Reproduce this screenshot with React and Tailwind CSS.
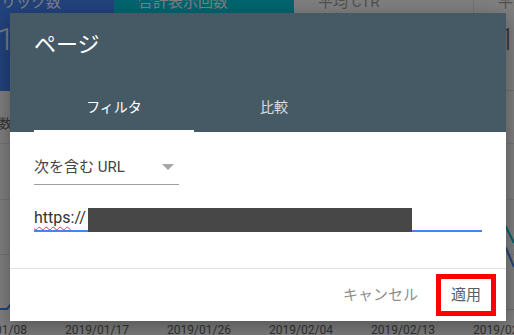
import React from "react";

const CARDS = [
  { label: "クリック数", value: "1,204", bg: "bg-[#4487fa]", text: "text-white", width: "w-[152px]", valueClass: "ml-[11px] text-white" },
  { label: "合計表示回数", value: "48,312", bg: "bg-[#00cadf]", text: "text-white", width: "w-[180px]", valueClass: "text-white" },
  { label: "平均 CTR", value: "2.5%", bg: "bg-white", text: "text-[#a3a3a3]", width: "w-[180px] border-r border-b border-[#e6e6e6]", valueClass: "text-[#737373]" },
  { label: "平均掲載順位", value: "18.4", bg: "bg-white", text: "text-[#a3a3a3]", width: "w-[180px] border-b border-[#e6e6e6]", valueClass: "text-[#737373]" },
];

const DATES = ["2019/01/08", "2019/01/17", "2019/01/26", "2019/02/04", "2019/02/13", "2019/02/22"];

function Chart() {
  return (
    <svg className="absolute inset-0" width="514" height="244" viewBox="0 0 514 244">
      {[52, 108, 163].map((y) => (
        <line key={y} x1="0" y1={y + 0.5} x2="514" y2={y + 0.5} stroke="#e8e8e8" strokeWidth="1" />
      ))}
      <line x1="0" y1="218.5" x2="514" y2="218.5" stroke="#dcdcdc" strokeWidth="1" />
      <polyline points="0,218 7,218 12,212" fill="none" stroke="#4285f4" strokeWidth="2" />
      <polyline points="500,126 506,136 514,152" fill="none" stroke="#00c4d8" strokeWidth="2" />
      <polyline points="500,148 506,157 514,176" fill="none" stroke="#4285f4" strokeWidth="2" />
    </svg>
  );
}

export default function App() {
  return (
    <div className="relative w-[514px] h-[335px] overflow-hidden bg-white font-['Roboto','Noto_Sans_CJK_JP',sans-serif]">
      {/* page under the dialog */}
      <div className="flex h-[91px] ml-[-38px]">
        {CARDS.map((c) => (
          <div key={c.label} className={`shrink-0 box-border h-[91px] pl-6 ${c.bg} ${c.width}`}>
            <div className={`mt-[-8px] text-[15px] leading-5 whitespace-nowrap ${c.text}`}>{c.label}</div>
            <div className={`mt-[7px] text-[32px] leading-10 font-light whitespace-nowrap ${c.valueClass}`}>{c.value}</div>
          </div>
        ))}
      </div>
      <div className="relative flex flex-col h-[244px]">
        <Chart />
        <div className="relative mt-[23px] ml-[-40px] w-[52px] text-[13px] leading-5 text-[#666] whitespace-nowrap">表示回数</div>
        <div className="relative mt-auto mb-[-3px] ml-[-56px] flex text-[12px] leading-4 text-[#666]">
          {DATES.map((d) => (
            <div key={d} className="w-[102px] shrink-0 text-center">{d}</div>
          ))}
        </div>
      </div>

      {/* scrim */}
      <div className="absolute inset-0 bg-black/50" />

      {/* dialog */}
      <div className="absolute left-[10px] top-[13px] w-[496px] h-[308px] flex flex-col bg-white shadow-[0_6px_20px_rgba(0,0,0,0.35)]">
        <div className="h-[119px] flex flex-col bg-[#465a65] px-6">
          <div className="mt-[17px] text-[22px] leading-[30px] text-white">ページ</div>
          <div className="mt-auto flex">
            <div className="w-[160px] h-[48px] flex flex-col">
              <div className="flex-1 flex items-center justify-center text-[14px] text-white">フィルタ</div>
              <div className="h-[2px] bg-white" />
            </div>
            <div className="w-[160px] h-[48px] flex flex-col">
              <div className="flex-1 flex items-center justify-center text-[14px] text-white/80">比較</div>
              <div className="h-[2px]" />
            </div>
          </div>
        </div>

        <div className="flex-1 px-6">
          <div className="mt-[18px] w-[145px] h-[35px] flex items-center justify-between pr-[5px] border-b border-[#9e9e9e]">
            <span className="text-[15px] text-[#444]">次を含む URL</span>
            <span className="w-0 h-0 border-l-[6px] border-r-[6px] border-t-[6px] border-l-transparent border-r-transparent border-t-[#a6a6a6]" />
          </div>
          <div className="relative mt-[23px] pb-[2px] border-b-2 border-[#4285f4] text-[16px] leading-5 text-[#333]">
            <span className="underline decoration-wavy decoration-[#e53935] decoration-1 underline-offset-[3px]">https</span>://
            <div className="absolute left-[54px] top-0 w-[324px] h-[24px] bg-[#474747]" />
          </div>
        </div>

        <div className="h-[53px] border-t border-[#e0e0e0] flex items-center justify-end pr-[10px]">
          <span className="mr-[18px] text-[15px] text-[#8f8f8f]">キャンセル</span>
          <span className="w-[60px] h-[42px] box-border border-[5px] border-[#ff0000] flex items-center justify-center text-[15px] text-[#52616b]">適用</span>
        </div>
      </div>
    </div>
  );
}
